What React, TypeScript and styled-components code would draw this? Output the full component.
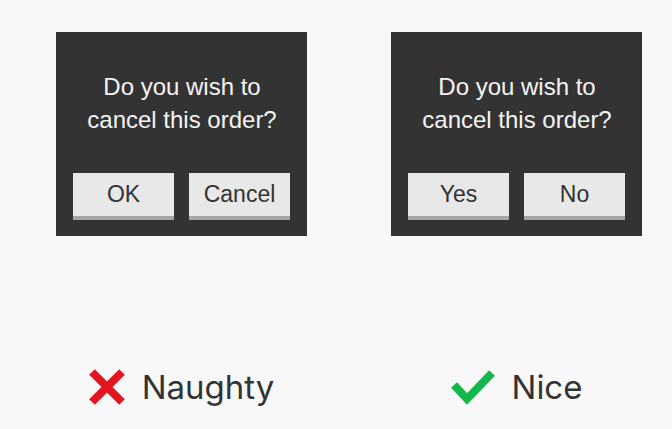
import React from "react";
import styled, { createGlobalStyle } from "styled-components";

const Global = createGlobalStyle`
  html, body { margin: 0; padding: 0; background: #f8f8f8; }
  body { font-family: "Liberation Sans", Arial, sans-serif; }
`;

const Page = styled.div`
  display: grid;
  grid-template-columns: 251px 251px;
  column-gap: 84px;
  padding: 32px 0 0 56px;
`;

const Column = styled.div`
  display: flex;
  flex-direction: column;
  align-items: center;
`;

const Dialog = styled.div`
  width: 251px;
  height: 204px;
  box-sizing: border-box;
  background: #333333;
  padding: 38px 16px 16px 17px;
  display: flex;
  flex-direction: column;
  justify-content: space-between;
`;

const Message = styled.p`
  margin: 0;
  color: #f4f4f4;
  font-family: "Liberation Sans", Arial, sans-serif;
  font-size: 24px;
  line-height: 33px;
  text-align: center;
`;

const Buttons = styled.div`
  display: flex;
  gap: 15px;
`;

const Button = styled.button`
  width: 101px;
  height: 47px;
  box-sizing: border-box;
  border: none;
  border-bottom: 4px solid #a6a6a6;
  background: #e8e8e8;
  color: #333333;
  font-family: "Liberation Sans", Arial, sans-serif;
  font-size: 23px;
  padding: 0;
  cursor: pointer;
`;

const Label = styled.div`
  margin-top: 131px;
  display: flex;
  align-items: center;
  gap: 17px;
  font-family: Inter, "Liberation Sans", sans-serif;
  font-size: 33px;
  color: #333333;
`;

const Cross = () => (
  <svg width="36" height="36" viewBox="0 0 36 36">
    <path d="M3 3 L33 33 M33 3 L3 33" stroke="#e3151f" strokeWidth="8" />
  </svg>
);

const Check = () => (
  <svg width="44" height="36" viewBox="0 0 44 36">
    <path d="M3 16 L16 30 L41 4" stroke="#12b84b" strokeWidth="8" fill="none" />
  </svg>
);

const Panel = ({ yes, no, mark, label }: { yes: string; no: string; mark: React.ReactNode; label: string }) => (
  <Column>
    <Dialog>
      <Message>
        Do you wish to
        <br />
        cancel this order?
      </Message>
      <Buttons>
        <Button>{yes}</Button>
        <Button>{no}</Button>
      </Buttons>
    </Dialog>
    <Label>
      {mark}
      <span>{label}</span>
    </Label>
  </Column>
);

export default function App() {
  return (
    <>
      <Global />
      <Page>
        <Panel yes="OK" no="Cancel" mark={<Cross />} label="Naughty" />
        <Panel yes="Yes" no="No" mark={<Check />} label="Nice" />
      </Page>
    </>
  );
}
